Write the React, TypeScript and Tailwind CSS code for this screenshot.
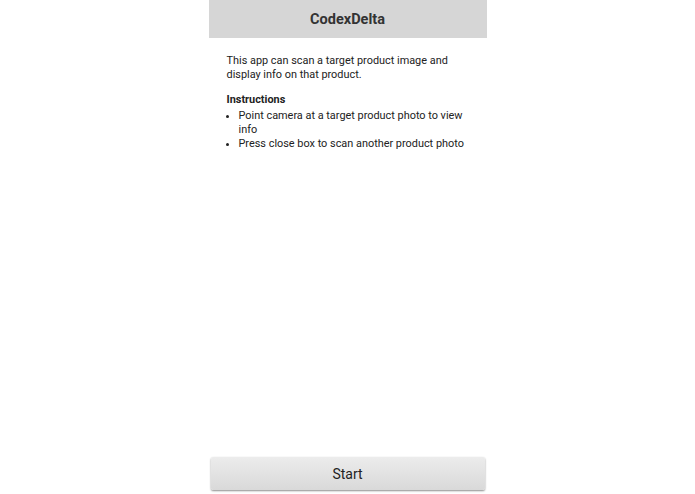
import React from 'react';

const steps = [
  'Point camera at a target product photo to view info',
  'Press close box to scan another product photo',
];

export default function App() {
  return (
    <div className="h-screen bg-white font-['Roboto',sans-serif] text-[#222]">
      <div className="mx-auto flex h-full w-[278px] flex-col">
        {/* Title bar */}
        <header className="flex h-[38px] shrink-0 items-center justify-center bg-[#d6d6d6] pt-[2px]">
          <h1 className="text-[14.5px] font-bold text-[#333]">CodexDelta</h1>
        </header>

        <main className="flex-1 px-[18px] pt-[16px] text-[10.9px] leading-[14px]">
          <p>This app can scan a target product image and display info on that product.</p>

          <h2 className="mt-[11px] font-bold">Instructions</h2>
          <ul className="mt-[2px] list-disc pl-[12px]">
            {steps.map((s, i) => (
              <li key={i}>{s}</li>
            ))}
          </ul>
        </main>

        {/* Start button */}
        <div className="px-[2px] pb-[4px]">
          <button className="h-[33px] w-full rounded-[2px] bg-gradient-to-b from-[#ececec] to-[#d9d9d9] pt-[1px] text-[14px] text-[#222] shadow-[0_1px_2px_rgba(0,0,0,0.45)]">
            Start
          </button>
        </div>
      </div>
    </div>
  );
}
